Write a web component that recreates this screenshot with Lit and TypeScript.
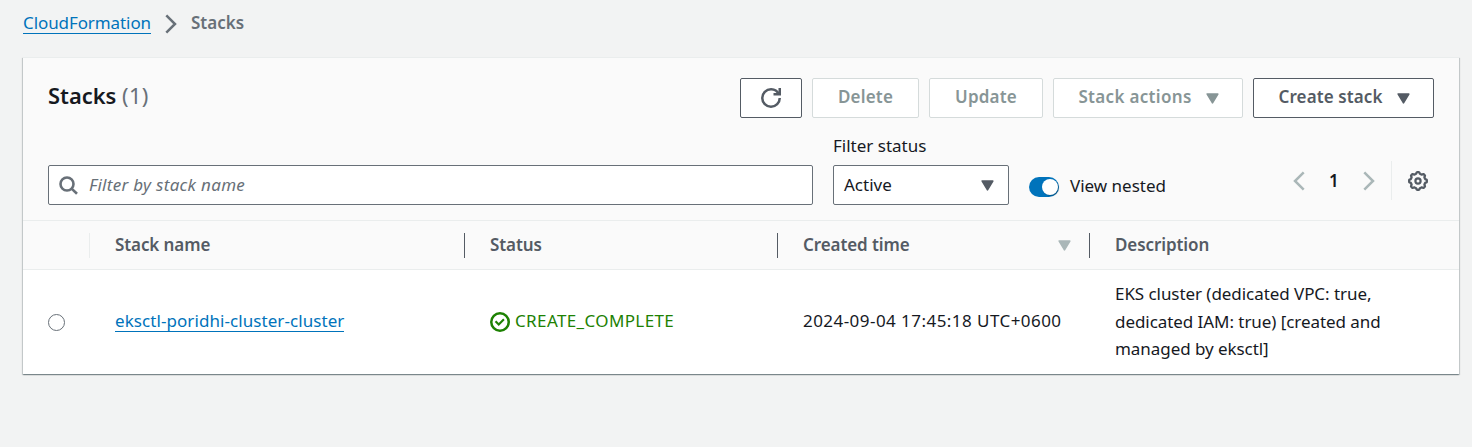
import { LitElement, html, css } from "lit";
import { customElement } from "lit/decorators.js";

const gearPath = (() => {
  const pts: string[] = [];
  for (let i = 0; i < 96; i++) {
    const a = (i / 96) * Math.PI * 2;
    const wave = Math.max(-1, Math.min(1, Math.cos(a * 8) * 1.8));
    const r = 8.1 + wave * 0.75;
    pts.push(`${(10 + r * Math.sin(a)).toFixed(2)} ${(10 - r * Math.cos(a)).toFixed(2)}`);
  }
  return `M${pts.join("L")}Z`;
})();

const caret = html`<svg class="caret" width="13" height="11" viewBox="0 0 13 11">
  <path d="M1.2 1h10.6L6.5 9.8z" fill="currentColor" stroke="currentColor" stroke-width="1.6" stroke-linejoin="round" />
</svg>`;

const chevronRight = html`<svg width="12" height="20" viewBox="0 0 12 20">
  <path d="M1.3 1.3 10 10l-8.7 8.7" fill="none" stroke="currentColor" stroke-width="2.5" />
</svg>`;

const chevronLeft = html`<svg width="12" height="20" viewBox="0 0 12 20">
  <path d="M10.7 1.3 2 10l8.7 8.7" fill="none" stroke="currentColor" stroke-width="2.5" />
</svg>`;

@customElement("app-root")
export class AppRoot extends LitElement {
  static styles = css`
    :host {
      display: block;
      box-sizing: border-box;
      height: 447px;
      padding: 9px 13px 0 23px;
      background: #f2f3f3;
      color: #16191f;
      font: 17px/27.5px "Noto Sans", "Open Sans", sans-serif;
      overflow: hidden;
    }
    * { box-sizing: border-box; }
    svg { display: block; flex: none; }

    .crumbs { display: flex; align-items: center; height: 28px; color: #687078; }
    .crumbs svg { margin: 2px 14px 0 14px; }
    .current { font-weight: 600; }
    .link { display: block; width: max-content; height: 22px; line-height: 21px; color: #0073bb; border-bottom: 1px solid #0073bb; }
    .crumbs .link { letter-spacing: -0.09px; }

    .card {
      margin-top: 20px;
      height: 317px;
      background: #fff;
      border-top: 1px solid #eaeded;
      box-shadow: 0 1px 1px 0 rgba(0, 28, 36, 0.3), 1px 1px 1px 0 rgba(0, 28, 36, 0.15), -1px 1px 1px 0 rgba(0, 28, 36, 0.15);
    }
    .head { height: 163px; padding: 20px 25px 0; background: #fafafa; border-bottom: 1px solid #eaeded; }
    .title-row { display: flex; align-items: center; gap: 10px; height: 40px; }
    .title { flex: 1; margin: 0; font-size: 21.9px; line-height: 36px; font-weight: 600; padding-bottom: 5px; }
    .count { font-weight: 400; color: #687078; letter-spacing: 0.3px; }
    .btn {
      display: flex; align-items: center; justify-content: center;
      height: 40px; padding: 0 0 2px; gap: 14px;
      font: inherit; font-weight: 600; letter-spacing: 0.2px;
      color: #545b64; background: #fff; border: 1px solid #545b64; border-radius: 2px;
    }
    .btn .caret { margin-top: 2px; }
    .off { color: #879596; border-color: #d5dbdb; }
    .w-refresh { width: 62px; padding: 0; }
    .w-delete { width: 107px; }
    .w-update { width: 114px; }
    .w-actions { width: 190px; padding-left: 1px; letter-spacing: 0.32px; }
    .w-create { width: 181px; padding-left: 1px; letter-spacing: 0.1px; }

    .filters { display: flex; align-items: flex-start; height: 87px; padding-top: 14px; }
    .search {
      display: flex; align-items: center; gap: 11px;
      width: 765px; height: 40px; margin-top: 33px; padding: 0 10px 1px;
      background: #fff; border: 1px solid #687078; border-radius: 2px;
      color: #687078; font-style: italic; letter-spacing: 0.3px;
    }
    .search svg { margin-top: 1px; }
    .status { width: 176px; margin-left: 20px; }
    .label { height: 33px; line-height: 27px; }
    .select {
      display: flex; align-items: center; justify-content: space-between;
      height: 40px; padding: 0 14px 1px 10px;
      background: #fff; border: 1px solid #687078; border-radius: 2px;
    }
    .select .caret { color: #545b64; margin-top: 1px; }
    .toggle { width: 30px; height: 20px; margin: 45px 11px 0 20px; padding: 2px; border-radius: 10px; background: #0073bb; }
    .knob { width: 16px; height: 16px; margin-left: 11px; border-radius: 50%; background: #fff; box-shadow: 1px 1px 1px rgba(0, 0, 0, 0.25); }
    .nested { margin-top: 40px; line-height: 27px; }
    .pager { display: flex; align-items: center; height: 39px; margin: 29px 6px 0 auto; color: #aab7b8; }
    .page { width: 10px; margin: 0 24px; text-align: center; font-weight: 600; color: #16191f; padding-right: 1px; font-size: 17px; }
    .rule { width: 1px; height: 39px; margin: 0 16px 0 16px; background: #eaeded; }
    .gear { color: #545b64; }

    .grid { display: grid; grid-template-columns: 67px 375px 313px 312px 1fr; }
    .header { height: 49px; background: #fafafa; border-bottom: 1px solid #eaeded; align-items: center; color: #545b64; font-weight: 600; letter-spacing: -0.09px; }
    .th { display: flex; align-items: center; justify-content: space-between; height: 25px; padding: 0 18px 1px 25px; border-right: 1px solid #545b64; }
    .th.first { border-color: #eaeded; }
    .th.last { border: 0; }
    .th .caret { color: #aab7b8; margin-top: 2px; }
    .row { height: 104px; align-items: center; }
    .td { padding: 0 25px 1px; }
    .radio { width: 17px; height: 17px; margin-top: 1px; border: 1px solid #687078; border-radius: 50%; background: #fff; }
    .td .link { letter-spacing: 0.07px; margin-top: -1px; }
    .ok { display: flex; align-items: center; gap: 5px; color: #1d8102; letter-spacing: 0.37px; padding-bottom: 3px; }
    .ok svg { margin-top: 3px; }
    .time { letter-spacing: 0.45px; white-space: nowrap; padding: 0 0 3px 25px; }
    .desc { letter-spacing: -0.06px; white-space: nowrap; }
  `;

  render() {
    return html`
      <nav class="crumbs">
        <a class="link">CloudFormation</a>${chevronRight}<span class="current">Stacks</span>
      </nav>
      <section class="card">
        <div class="head">
          <div class="title-row">
            <h2 class="title">Stacks <span class="count">(1)</span></h2>
            <button class="btn w-refresh" aria-label="Refresh">
              <svg width="20" height="20" viewBox="0 0 16 16" fill="none" stroke="currentColor" stroke-width="2">
                <path d="M10 5h5V0" />
                <path d="M15 8a7 7 0 1 1-7-7 6.87 6.87 0 0 1 6.3 4" />
              </svg>
            </button>
            <button class="btn off w-delete">Delete</button>
            <button class="btn off w-update">Update</button>
            <button class="btn off w-actions">Stack actions ${caret}</button>
            <button class="btn w-create">Create stack ${caret}</button>
          </div>
          <div class="filters">
            <div class="search">
              <svg width="19" height="19" viewBox="0 0 19 19" fill="none" stroke="currentColor" stroke-width="2.6">
                <circle cx="8" cy="8" r="6.5" />
                <path d="m12.6 12.6 5.4 5.2" />
              </svg>
              <span>Filter by stack name</span>
            </div>
            <div class="status">
              <div class="label">Filter status</div>
              <div class="select"><span>Active</span>${caret}</div>
            </div>
            <div class="toggle"><div class="knob"></div></div>
            <div class="nested">View nested</div>
            <div class="pager">
              ${chevronLeft}<span class="page">1</span>${chevronRight}
              <div class="rule"></div>
              <svg class="gear" width="20" height="20" viewBox="0 0 20 20" fill="none" stroke="currentColor">
                <path d=${gearPath} stroke-width="2.3" stroke-linejoin="round" />
                <circle cx="10" cy="10" r="2.6" stroke-width="2.2" />
              </svg>
            </div>
          </div>
        </div>
        <div class="grid header">
          <div class="th first"></div>
          <div class="th">Stack name</div>
          <div class="th">Status</div>
          <div class="th">Created time ${caret}</div>
          <div class="th last">Description</div>
        </div>
        <div class="grid row">
          <div class="td"><div class="radio"></div></div>
          <div class="td"><a class="link">eksctl-poridhi-cluster-cluster</a></div>
          <div class="td ok">
            <svg width="20" height="20" viewBox="0 0 16 16" fill="none" stroke="currentColor" stroke-width="2">
              <circle cx="8" cy="8" r="7" />
              <path d="m5 8 2 2 3.521-3.521" stroke-linecap="square" stroke-width="1.7" />
            </svg>
            <span>CREATE_COMPLETE</span>
          </div>
          <div class="td time">2024-09-04 17:45:18 UTC+0600</div>
          <div class="td desc">EKS cluster (dedicated VPC: true,<br />dedicated IAM: true) [created and<br />managed by eksctl]</div>
        </div>
      </section>
    `;
  }
}
